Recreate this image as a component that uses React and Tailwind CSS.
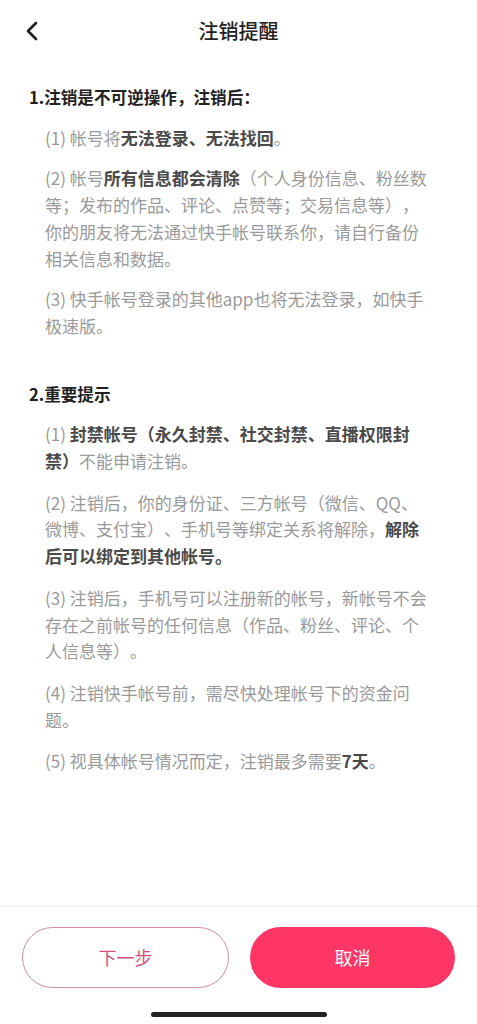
import { ChevronLeft } from "lucide-react";

const font = { fontFamily: '"Noto Sans CJK SC", "Noto Sans", sans-serif' };

function Item({ children, className = "mt-[14px]" }) {
  return (
    <p className={`${className} mx-4 text-[17px] leading-[26.7px] text-[#9a9a9a] [text-spacing-trim:space-all]`}>
      {children}
    </p>
  );
}

function B({ children }) {
  return <span className="font-bold text-[#4a4a4a]">{children}</span>;
}

export default function App() {
  return (
    <div className="w-[477px] h-[1024px] bg-white flex flex-col" style={font}>
      <div className="h-[62px] flex items-center relative shrink-0">
        <button className="absolute left-[16px] top-[15px] text-[#222]">
          <ChevronLeft className="w-8 h-8" strokeWidth={2} />
        </button>
        <h1 className="w-full text-center text-[20px] font-medium text-[#222]">
          注销提醒
        </h1>
      </div>

      <div className="flex-1 px-[29px] pt-[22px]">
        <h2 className="text-[16.6px] leading-[26.7px] font-bold text-[#222] [text-spacing-trim:space-all]">
          1.注销是不可逆操作，注销后：
        </h2>
        <Item>
          (1) 帐号将<B>无法登录、无法找回</B>。
        </Item>
        <Item>
          (2) 帐号<B>所有信息都会清除</B>（个人身份信息、粉丝数等；发布的作品、评论、点赞等；交易信息等），你的朋友将无法通过快手帐号联系你，请自行备份相关信息和数据。
        </Item>
        <Item>(3) 快手帐号登录的其他app也将无法登录，如快手极速版。</Item>

        <h2 className="mt-[41px] text-[16.6px] leading-[26.7px] font-bold text-[#222]">
          2.重要提示
        </h2>
        <Item>
          (1) <B>封禁帐号（永久封禁、社交封禁、直播权限封禁）</B>不能申请注销。
        </Item>
        <Item className="mt-[15px]">
          (2) 注销后，你的身份证、三方帐号（微信、QQ、微博、支付宝）、手机号等绑定关系将解除，<B>解除后可以绑定到其他帐号。</B>
        </Item>
        <Item className="mt-[15px]">
          (3) 注销后，手机号可以注册新的帐号，新帐号不会存在之前帐号的任何信息（作品、粉丝、评论、个人信息等）。
        </Item>
        <Item className="mt-[15px]">(4) 注销快手帐号前，需尽快处理帐号下的资金问题。</Item>
        <Item className="mt-[15px]">
          (5) 视具体帐号情况而定，注销最多需要<B>7天</B>。
        </Item>
      </div>

      <div className="border-t border-[#efefef] shrink-0">
        <div className="flex gap-[21px] px-[22px] pt-[20px]">
          <button className="flex-1 h-[61px] rounded-full border border-[#d48aa4] text-[18px] text-[#d24f7c]">
            下一步
          </button>
          <button className="flex-1 h-[61px] rounded-full bg-[#fe3666] text-[18px] text-white">
            取消
          </button>
        </div>
        <div className="flex justify-center pt-[24px] pb-[7px]">
          <div className="w-[176px] h-[5px] rounded-full bg-[#222]" />
        </div>
      </div>
    </div>
  );
}
